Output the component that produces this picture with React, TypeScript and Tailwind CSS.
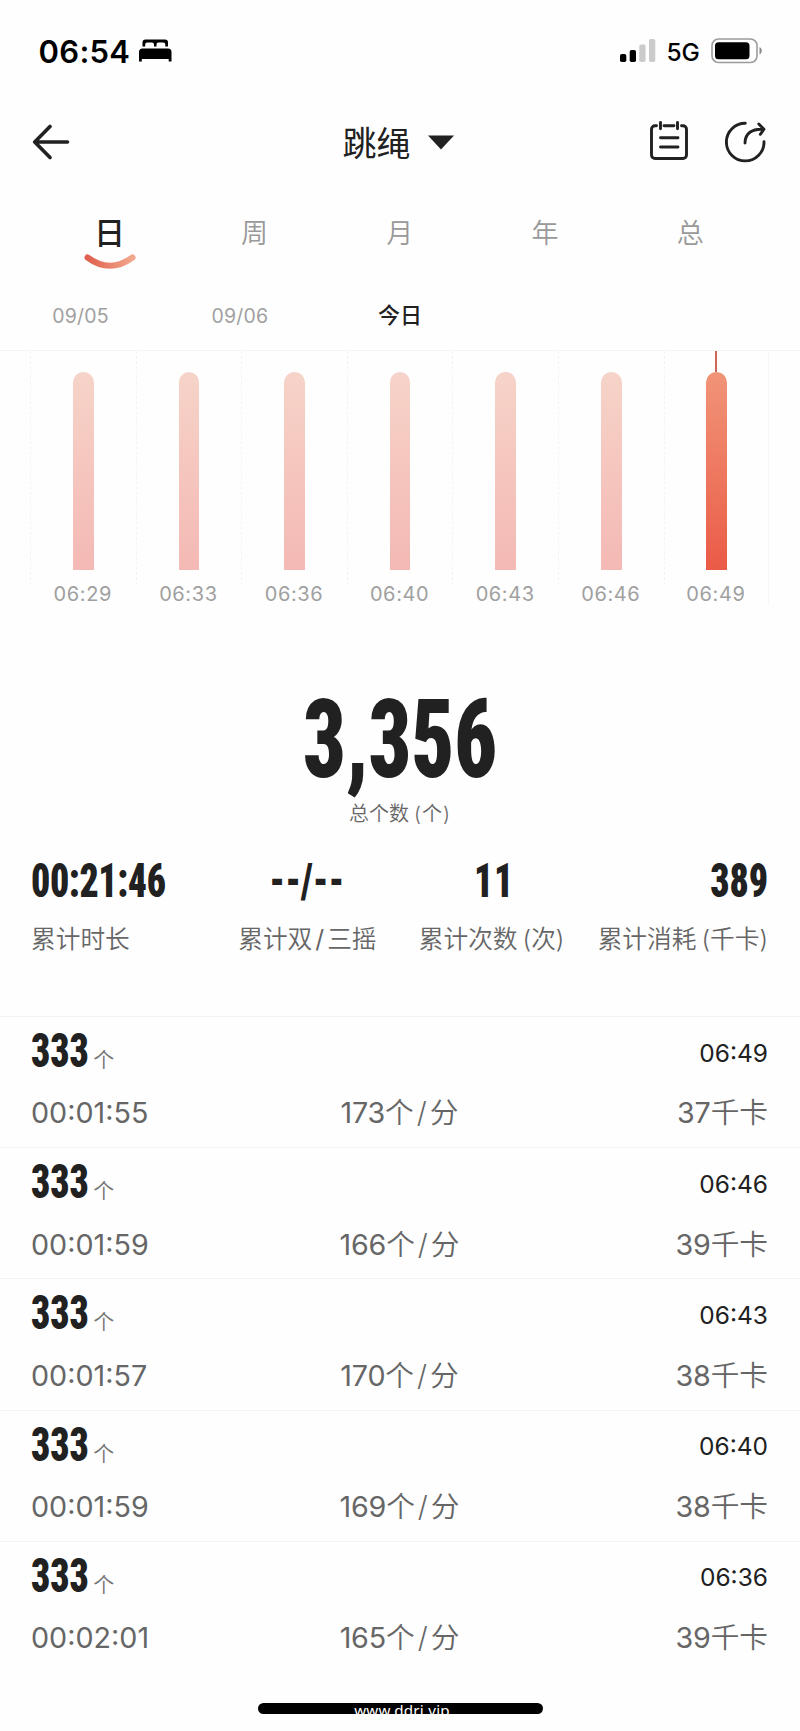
import type { ReactNode } from 'react';

const tabs = ['周', '月', '年', '总'];
const bars = ['06:29', '06:33', '06:36', '06:40', '06:43', '06:46', '06:49'];
const records = [
  { count: '333', time: '06:49', duration: '00:01:55', rate: '173', kcal: '37' },
  { count: '333', time: '06:46', duration: '00:01:59', rate: '166', kcal: '39' },
  { count: '333', time: '06:43', duration: '00:01:57', rate: '170', kcal: '38' },
  { count: '333', time: '06:40', duration: '00:01:59', rate: '169', kcal: '38' },
  { count: '333', time: '06:36', duration: '00:02:01', rate: '165', kcal: '39' },
];

function Num({ className, children }: { className: string; children: ReactNode }) {
  return (
    <span
      className={`inline-block scale-x-[.77] whitespace-nowrap font-["Roboto_Condensed",Roboto,sans-serif] font-black [font-stretch:75%] ${className}`}
    >
      {children}
    </span>
  );
}

function StatusBar() {
  return (
    <div className="flex h-[102px] items-center pl-[38.500px] pr-[37px] text-black">
      <span className="w-[100px] text-[31px] font-semibold leading-none tracking-[0.3px]">06:54</span>
      <svg className="-mt-[1px] ml-[0.500px]" width="33" height="23" viewBox="0 0 33 23">
        <path d="M3.500 7.500V3.500A3 3 0 0 1 6.500 .5H26a3 3 0 0 1 3 3V7.500H26.300V5.500a2 2 0 0 0-2-2H19.500a2 2 0 0 0-2 2V7.500H15V5.500a2 2 0 0 0-2-2H8.200a2 2 0 0 0-2 2V7.500Z" />
        <path d="M0 22.500V13a3.500 3.500 0 0 1 3.500-3.500h25.500a3.500 3.500 0 0 1 3.500 3.500v9.500h-2.800V20H2.800v2.500Z" />
      </svg>
      <svg className="ml-auto" width="36" height="24" viewBox="0 0 36 24">
        <rect x="0" y="15" width="6.300" height="8" rx="1.800" />
        <rect x="9.700" y="11" width="6.300" height="12" rx="1.800" />
        <rect x="19.300" y="5.500" width="6.300" height="17.500" rx="1.800" fill="#cbcbcb" />
        <rect x="29" y="0" width="6.300" height="23" rx="1.800" fill="#cbcbcb" />
      </svg>
      <span className="ml-[10.500px] mt-[2px] w-[34px] text-[24.500px] font-[450] leading-none tracking-[-0.2px]">5G</span>
      <svg className="ml-[10.500px]" width="52" height="26" viewBox="0 0 52 26">
        <rect x="1" y="1" width="45" height="23.500" rx="6.500" fill="none" stroke="#9c9c9c" strokeWidth="1.600" />
        <rect x="4" y="4.300" width="34.500" height="17" rx="3.500" />
        <path d="M48.500 9v7.500c3-1.300 3-6.200 0-7.500Z" fill="#8a8a8a" />
      </svg>
    </div>
  );
}

function Header() {
  return (
    <div className="flex h-[80px] items-center justify-between pl-[32px] pr-[34px]">
      <svg width="115" height="36" viewBox="0 0 115 36" fill="none" stroke="#212121" strokeWidth="3.600" strokeLinecap="round" strokeLinejoin="round">
        <path d="M18 2.500 2.700 18 18 33.500M3 18H35.500" />
      </svg>
      <div className="-ml-[1px] flex items-center gap-[17px]">
        <span className="mt-[3px] text-[34px] leading-none">跳绳</span>
        <svg width="26" height="15" viewBox="0 0 26 15" fill="#212121">
          <path d="M0 .5H26L13 14.500Z" />
        </svg>
      </div>
      <div className="flex items-center gap-[37px]">
        <svg className="-mt-[2px]" width="38" height="40" viewBox="0 0 38 40" fill="none" stroke="#212121" strokeWidth="2.900" strokeLinecap="round">
          <path d="M6.500 4.800H5a3.500 3.500 0 0 0-3.500 3.500V34A3.500 3.500 0 0 0 5 37.500H33a3.500 3.500 0 0 0 3.500-3.500V8.300A3.500 3.500 0 0 0 33 4.800H31.500M14 4.800H24M10.500 1.500V7.700M27.500 1.500V7.700M10.500 16.800H28M10.500 26H28" />
        </svg>
        <svg width="41" height="42" viewBox="0 0 41 42" fill="none" stroke="#212121" strokeWidth="2.900" strokeLinecap="round" strokeLinejoin="round">
          <path d="M20.300 2.300A18.800 18.800 0 1 0 39 20.800M20 22C20 12.500 27 7.500 38.300 8.300M33.800 3 39 8.200 35.300 13.300" />
        </svg>
      </div>
    </div>
  );
}

function Tabs() {
  return (
    <div className="flex h-[100px] pl-[37px] text-[27px] font-[350] text-[#999999]">
      <div className="flex w-[145px] flex-col items-center pt-[31px]">
        <span className="text-[31px] font-medium leading-[40px] text-[#212121]">日</span>
        <svg width="54" height="20" viewBox="0 0 54 20" fill="none">
          <defs>
            <linearGradient id="smile">
              <stop stopColor="#e0604e" />
              <stop offset="1" stopColor="#f1a78d" />
            </linearGradient>
          </defs>
          <path d="M4.500 4.500Q27 21 49.500 4.500" stroke="url(#smile)" strokeWidth="6" strokeLinecap="round" />
        </svg>
      </div>
      {tabs.map((t) => (
        <div key={t} className="w-[145.200px] pt-[32px] text-center leading-[40px]">{t}</div>
      ))}
    </div>
  );
}

function Chart() {
  return (
    <>
      <div className="flex h-[69px] items-center border-b border-[#f4f4f4] text-[19.500px] text-[#a0a0a0]">
        <span className="w-[160px] pl-[1px] pt-[1px] text-center tracking-[0.200px]">09/05</span>
        <span className="w-[160px] pt-[1px] text-center tracking-[0.200px]">09/06</span>
        <span className="w-[160px] pb-[2px] text-center text-[22px] font-medium text-[#212121]">今日</span>
      </div>
      <div className="flex h-[254px] pl-[30px]">
        {bars.map((label, i) => {
          const active = i === bars.length - 1;
          return (
            <div
              key={label}
              className={`flex w-[105.600px] flex-col items-center ${active ? 'border-r border-[#f7f7f7]' : ''}`}
            >
              <div className="flex h-[234px] w-full shrink-0 flex-col items-center border-l border-dashed border-[#f4f4f4]">
                <div className={`h-[21px] w-[2px] ${active ? 'bg-[#cc6656]' : ''}`} />
                <div
                  className={`h-[198px] w-[20.500px] rounded-t-full bg-linear-to-b ${
                    active ? 'from-[#f09478] to-[#ea5a47]' : 'from-[#f6d3c8] to-[#f4b9b4]'
                  }`}
                />
              </div>
              <span className="-mt-[5px] text-[20px] leading-[28px] tracking-[0.600px] text-[#a0a0a0]">{label}</span>
            </div>
          );
        })}
      </div>
    </>
  );
}

function Stat({ value, label, pos, origin }: { value: string; label: ReactNode; pos: string; origin: string }) {
  return (
    <div className={`flex w-[184.250px] flex-col whitespace-nowrap ${pos}`}>
      <Num className={`text-[49px] leading-[60px] ${origin}`}>{value}</Num>
      <span className="mt-[11px] text-[24.700px] font-[350] leading-[34px] text-[#666666]">{label}</span>
    </div>
  );
}

export default function App() {
  return (
    <div className='flex h-[1731px] w-[800px] flex-col overflow-hidden bg-[#fefefe] font-[Inter,"Noto_Sans_CJK_SC",sans-serif] text-[#212121]'>
      <StatusBar />
      <Header />
      <Tabs />
      <Chart />

      <div className="flex h-[246px] flex-col items-center pt-[69px]">
        <Num className="text-[109px] leading-[133px]">3,356</Num>
        <span className="mt-[-7px] text-[20px] font-[350] leading-[28px] text-[#666666]">
          总个数<span className="ml-[5px] tracking-[1px]">(个)</span>
        </span>
      </div>

      <div className="flex h-[165px] pl-[31px]">
        <Stat value="00:21:46" label="累计时长" pos="items-start" origin="origin-left tracking-[-0.500px]" />
        <Stat value="--/--" label={<>累计双<span className="mx-[3px] font-normal">/</span>三摇</>} pos="items-center" origin="origin-center" />
        <Stat value="11" label={<>累计次数<span className="ml-[5px]">(次)</span></>} pos="items-center" origin="origin-center ml-[4px] tracking-[1px]" />
        <Stat value="389" label={<>累计消耗<span className="ml-[5px]">(千卡)</span></>} pos="items-end" origin="origin-right" />
      </div>

      <div className="flex flex-col">
        {records.map((r) => (
          <div key={r.time} className="flex h-[131.200px] flex-col border-t border-[#f3f3f3] pl-[31px] pr-[32px]">
            <div className="flex h-[71px] items-center justify-between">
              <div className="-mt-[3px] flex items-baseline">
                <Num className="-mr-[13px] origin-left text-[49px] leading-[60px]">{r.count}</Num>
                <span className="text-[21px] font-[350] text-[#757575]">个</span>
              </div>
              <span className="pt-[1px] text-[24.500px]">{r.time}</span>
            </div>
            <div className="grid h-[50px] grid-cols-3 items-center text-[28.700px] font-[350] text-[#666666]">
              <span>
                <span className="font-[370]">{r.duration}</span>
              </span>
              <span className="text-center">
                <span className="font-[370] tracking-[-0.200px]">{r.rate}</span>个<span className="mx-[3px]">/</span>分
              </span>
              <span className="text-right">
                <span className="font-[370] tracking-[-0.200px]">{r.kcal}</span>千卡
              </span>
            </div>
          </div>
        ))}
      </div>

      <div className="mx-auto mt-[31px] flex h-[11px] w-[285px] shrink-0 justify-center rounded-full bg-black">
        <span className='pl-[4px] font-["Noto_Sans",sans-serif] text-[15.200px] leading-[14px] tracking-[0.200px] text-white'>www.ddrj.vip</span>
      </div>
    </div>
  );
}
